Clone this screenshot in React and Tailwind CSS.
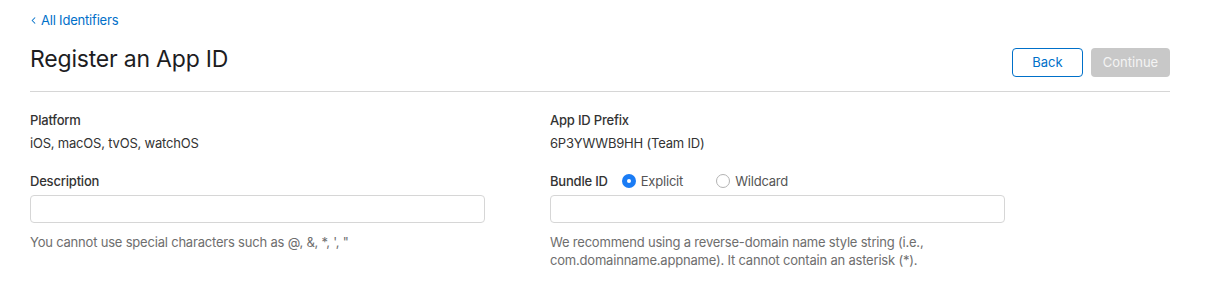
import { ChevronLeft } from 'lucide-react';

function Radio({ label, checked }) {
  return (
    <label className="flex items-center gap-[5px] text-[13px] text-[#555]">
      {checked ? (
        <span className="w-[14px] h-[14px] rounded-full bg-[#1a7cf5] flex items-center justify-center">
          <span className="w-[4px] h-[4px] rounded-full bg-white" />
        </span>
      ) : (
        <span className="w-[14px] h-[14px] rounded-full border border-[#b3b3b3] bg-white" />
      )}
      {label}
    </label>
  );
}

export default function App() {
  return (
    <div className="bg-white min-h-[296px] font-['Inter','Liberation_Sans',sans-serif] text-[#333] tracking-[-0.2px]">
      <div className="w-[1170px] pl-[30px] pt-[11px]">
        {/* Back link */}
        <a className="flex items-center text-[13px] leading-[18px] text-[#0070c9]">
          <ChevronLeft className="w-[11px] h-[11px] -ml-[2px] mr-[2px]" strokeWidth={2.2} />
          All Identifiers
        </a>

        {/* Title row */}
        <div className="flex items-start justify-between border-b border-[#d6d6d6] pb-[14px]">
          <h1 className="mt-[16px] text-[23px] leading-[28px] text-[#1d1d1f] tracking-[-0.2px]">
            Register an App ID
          </h1>
          <div className="flex gap-[8px] mt-[19px] tracking-normal">
            <button className="w-[71px] h-[29px] rounded-[4px] border border-[#0070c9] text-[13px] text-[#0070c9]">
              Back
            </button>
            <button className="w-[79px] h-[29px] rounded-[4px] bg-[#c8c8c8] text-[13px] text-[#f4f4f4]">
              Continue
            </button>
          </div>
        </div>

        {/* Form */}
        <div className="grid grid-cols-[520px_1fr] text-[13px] leading-[18px]">
          <div>
            <div className="mt-[19px] font-medium">Platform</div>
            <div className="mt-[5px]">iOS, macOS, tvOS, watchOS</div>
            <div className="mt-[20px] font-medium">Description</div>
            <input className="mt-[5px] w-[455px] h-[28px] rounded-[4px] border border-[#d6d6d6] outline-none" />
            <p className="mt-[10px] text-[#6e6e6e]">You cannot use special characters such as @, &amp;, *, ', "</p>
          </div>
          <div>
            <div className="mt-[19px] font-medium">App ID Prefix</div>
            <div className="mt-[5px]">6P3YWWB9HH (Team ID)</div>
            <div className="mt-[20px] flex items-center">
              <span className="font-medium">Bundle ID</span>
              <div className="ml-[14px]">
                <Radio label="Explicit" checked />
              </div>
              <div className="ml-[33px]">
                <Radio label="Wildcard" />
              </div>
            </div>
            <input className="mt-[5px] w-[455px] h-[28px] rounded-[4px] border border-[#d6d6d6] outline-none" />
            <p className="mt-[10px] text-[#6e6e6e]">
              We recommend using a reverse-domain name style string (i.e.,
              <br />
              com.domainname.appname). It cannot contain an asterisk (*).
            </p>
          </div>
        </div>
      </div>
    </div>
  );
}
